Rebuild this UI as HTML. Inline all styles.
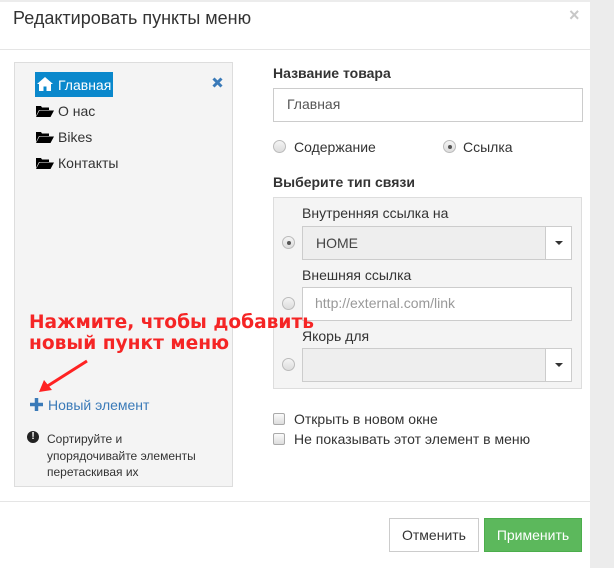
<!DOCTYPE html>
<html><head><meta charset="utf-8"><style>
*{box-sizing:border-box;margin:0;padding:0}
body{width:614px;height:568px;background:#ececec;font-family:"Liberation Sans",sans-serif;color:#333;position:relative;overflow:hidden;font-size:14px}
.modal{position:absolute;left:0;top:2px;width:590px;height:566px;background:#fff}
.abs{position:absolute;white-space:nowrap}
.radio{position:absolute;width:13px;height:13px;border-radius:50%;border:1px solid #bbb;background:linear-gradient(#f4f4f4,#ddd)}
.radio.on::after{content:"";position:absolute;left:3.5px;top:3.5px;width:4px;height:4px;border-radius:50%;background:#555}
.cb{position:absolute;width:12px;height:12px;border-radius:2px;border:1px solid #aaa;background:linear-gradient(#fafafa,#ddd)}
.sel{position:absolute;border:1px solid #ccc;background:#eee}
.sel .btn{position:absolute;right:0;top:0;width:26px;height:100%;background:#fff;border-left:1px solid #ccc}
.sel .btn::after{content:"";position:absolute;left:9px;top:14px;border:4px solid transparent;border-top:4px solid #333;border-bottom:0}
</style></head><body>
<div class="modal"></div>
<div class="abs" style="left:13px;top:8px;font-size:18px;color:#333">Редактировать пункты меню</div>
<div class="abs" style="left:569px;top:5px;font-size:18px;color:#c8c8c8;font-weight:bold">×</div>
<div class="abs" style="left:0;top:49px;width:590px;height:1px;background:#e5e5e5"></div>

<div class="abs" style="left:14px;top:62px;width:219px;height:425px;background:#f4f4f4;border:1px solid #ddd"></div>
<div class="abs" style="left:35px;top:72px;width:78px;height:25px;background:#0a88cc"></div>
<svg class="abs" style="left:37px;top:77px" width="16" height="14" viewBox="0 0 16 14"><path d="M8 0L0 7h2v7h4.5V9.5h3V14H14V7h2z" fill="#fff"/></svg>
<div class="abs" style="left:58px;top:77px;color:#fff;font-size:14px">Главная</div>
<svg class="abs" style="left:212px;top:77px" width="11" height="11" viewBox="0 0 11 11"><path d="M1.5 1.5l8 8M9.5 1.5l-8 8" stroke="#3a7ab8" stroke-width="3"/></svg>
<svg class="abs" style="left:36px;top:105px" width="18" height="12" viewBox="0 0 18 12"><path d="M0 1h5l1 1.5h7V5H3L0 11z M3.5 5.5H18L14.5 12H0z" fill="#000"/></svg>
<div class="abs" style="left:58px;top:103px">О нас</div>
<svg class="abs" style="left:36px;top:131px" width="18" height="12" viewBox="0 0 18 12"><path d="M0 1h5l1 1.5h7V5H3L0 11z M3.5 5.5H18L14.5 12H0z" fill="#000"/></svg>
<div class="abs" style="left:58px;top:129px">Bikes</div>
<svg class="abs" style="left:36px;top:157px" width="18" height="12" viewBox="0 0 18 12"><path d="M0 1h5l1 1.5h7V5H3L0 11z M3.5 5.5H18L14.5 12H0z" fill="#000"/></svg>
<div class="abs" style="left:58px;top:155px">Контакты</div>

<svg class="abs" style="left:36px;top:358px" width="56" height="40" viewBox="0 0 56 40"><path d="M51 3L10 29" stroke="#f22" stroke-width="3"/><path d="M3 34L8 22L16 32z" fill="#f22"/></svg>
<svg class="abs" style="left:30px;top:398px" width="13" height="13" viewBox="0 0 13 13"><path d="M6.5 0v13M0 6.5h13" stroke="#3a7ab8" stroke-width="3.5"/></svg>
<div class="abs" style="left:48px;top:397px;color:#3a7ab8;font-size:14px">Новый элемент</div>
<div class="abs" style="left:27px;top:431px;width:12px;height:12px;border-radius:50%;background:#222;color:#fff;font-size:10px;font-weight:bold;text-align:center;line-height:12px">!</div>
<div class="abs" style="left:47px;top:431px;font-size:12px;line-height:16.5px">Сортируйте и<br>упорядочивайте элементы<br>перетаскивая их</div>

<div class="abs" style="left:273px;top:65px;font-weight:bold">Название товара</div>
<div class="abs" style="left:273px;top:88px;width:310px;height:34px;border:1px solid #ccc"></div>
<div class="abs" style="left:287px;top:96px;color:#555">Главная</div>
<div class="radio" style="left:273px;top:140px"></div>
<div class="abs" style="left:294px;top:139px">Содержание</div>
<div class="radio on" style="left:443px;top:140px"></div>
<div class="abs" style="left:463px;top:139px">Ссылка</div>
<div class="abs" style="left:273px;top:174px;font-weight:bold">Выберите тип связи</div>
<div class="abs" style="left:273px;top:197px;width:309px;height:192px;background:#f4f4f4;border:1px solid #ddd"></div>
<div class="abs" style="left:302px;top:205px">Внутренняя ссылка на</div>
<div class="radio on" style="left:282px;top:236px"></div>
<div class="sel" style="left:302px;top:226px;width:270px;height:34px"><span class="abs" style="left:13px;top:8px;color:#444">HOME</span><div class="btn"></div></div>
<div class="abs" style="left:302px;top:267px">Внешняя ссылка</div>
<div class="radio" style="left:282px;top:297px"></div>
<div class="abs" style="left:302px;top:287px;width:270px;height:34px;border:1px solid #ccc;background:#fff"></div>
<div class="abs" style="left:315px;top:295px;color:#999">http://external.com/link</div>
<div class="abs" style="left:302px;top:328px">Якорь для</div>
<div class="radio" style="left:282px;top:358px"></div>
<div class="sel" style="left:302px;top:348px;width:270px;height:34px"><div class="btn"></div></div>

<div class="abs" style="left:29px;top:312px;z-index:5;font-family:'DejaVu Sans',sans-serif;font-weight:bold;font-size:18.6px;line-height:21px;color:#f52525">Нажмите, чтобы добавить<br>новый пункт меню</div>

<div class="cb" style="left:273px;top:413px"></div>
<div class="abs" style="left:294px;top:411px">Открыть в новом окне</div>
<div class="cb" style="left:273px;top:433px"></div>
<div class="abs" style="left:294px;top:431px">Не показывать этот элемент в меню</div>

<div class="abs" style="left:0;top:501px;width:590px;height:1px;background:#e5e5e5"></div>
<div class="abs" style="left:389px;top:518px;width:90px;height:34px;border:1px solid #ccc;background:#fff;text-align:center;line-height:32px">Отменить</div>
<div class="abs" style="left:484px;top:518px;width:98px;height:34px;border:1px solid #4cae4c;background:#5cb85c;color:#fff;text-align:center;line-height:32px">Применить</div>
</body></html>
